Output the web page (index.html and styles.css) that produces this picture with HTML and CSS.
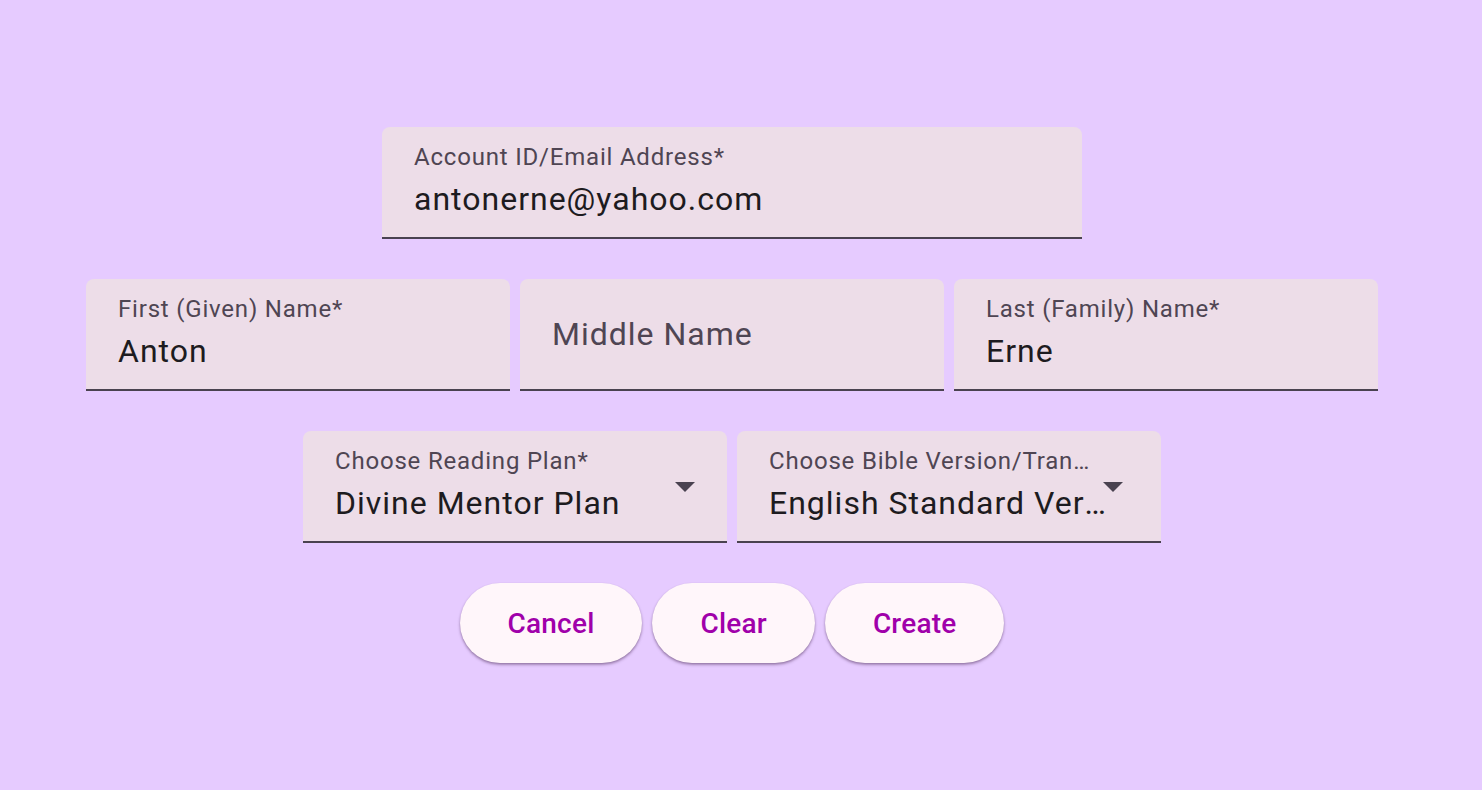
FILE: index.html
```html
<!DOCTYPE html>
<html lang="en">
<head>
<meta charset="utf-8">
<title>Create Account</title>
<link rel="stylesheet" href="styles.css">
</head>
<body>
<main class="page">
  <form class="form">
    <div class="row">
      <div class="field field-wide">
        <div class="label">Account ID/Email Address*</div>
        <div class="value">antonerne@yahoo.com</div>
      </div>
    </div>
    <div class="row">
      <div class="field">
        <div class="label">First (Given) Name*</div>
        <div class="value">Anton</div>
      </div>
      <div class="field field-empty">
        <div class="placeholder">Middle Name</div>
      </div>
      <div class="field">
        <div class="label">Last (Family) Name*</div>
        <div class="value">Erne</div>
      </div>
    </div>
    <div class="row">
      <div class="field select select-plan">
        <div class="select-text">
          <div class="label">Choose Reading Plan*</div>
          <div class="value">Divine Mentor Plan</div>
        </div>
        <svg class="arrow" width="20" height="10" viewBox="7 10 10 5"><path d="M7 10l5 5 5-5z" fill="#4a4250"/></svg>
      </div>
      <div class="field select select-version">
        <div class="select-text">
          <div class="label">Choose Bible Version/Translation*</div>
          <div class="value value-long">English Standard Version</div>
        </div>
        <svg class="arrow" width="20" height="10" viewBox="7 10 10 5"><path d="M7 10l5 5 5-5z" fill="#4a4250"/></svg>
      </div>
    </div>
    <div class="row buttons">
      <button type="button" class="btn">Cancel</button>
      <button type="button" class="btn">Clear</button>
      <button type="button" class="btn">Create</button>
    </div>
  </form>
</main>
</body>
</html>
```
FILE: styles.css
```css
html, body {
  margin: 0;
  padding: 0;
  background: #e6cbff;
  font-family: Roboto, "Liberation Sans", sans-serif;
}

.page {
  width: 1464px;
  min-height: 790px;
  box-sizing: border-box;
  padding-top: 127px;
}

.form {
  display: flex;
  flex-direction: column;
  align-items: center;
  gap: 40px;
}

.row {
  display: flex;
  gap: 10px;
  justify-content: center;
}

.field {
  width: 424px;
  height: 112px;
  box-sizing: border-box;
  background: #eddde8;
  border-radius: 8px 8px 0 0;
  border-bottom: 2px solid #4a4250;
  padding: 14px 32px 0 32px;
  overflow: hidden;
}

.field-wide {
  width: 700px;
}

.label {
  font-size: 24px;
  line-height: 32px;
  letter-spacing: 0.8px;
  color: #4f4553;
  white-space: nowrap;
  overflow: hidden;
  text-overflow: ellipsis;
}

.value {
  margin-top: 6px;
  font-size: 32px;
  line-height: 40px;
  letter-spacing: 1px;
  color: #1d1b20;
  white-space: nowrap;
  overflow: hidden;
  text-overflow: ellipsis;
}

.value-long {
  margin-right: -9px;
}

.field-empty {
  display: flex;
  align-items: center;
  padding-top: 0;
}

.placeholder {
  font-size: 32px;
  line-height: 40px;
  letter-spacing: 1px;
  color: #4f4553;
}

.select {
  display: flex;
  align-items: flex-start;
}

.select-plan {
  padding-right: 32px;
}

.select-version {
  padding-right: 38px;
}

.select-text {
  flex: 1;
  min-width: 0;
}

.arrow {
  flex: none;
  display: block;
  margin-top: 37px;
  margin-left: 3px;
  position: relative;
}

.buttons {
  gap: 10px;
}

.btn {
  height: 80px;
  padding: 0 48px;
  border: none;
  border-radius: 40px;
  background: #fff6fa;
  color: #a000aa;
  font-family: Roboto, "Liberation Sans", sans-serif;
  font-size: 28px;
  font-weight: 500;
  letter-spacing: 0.2px;
  box-shadow: 0 2px 3px rgba(60, 30, 70, 0.35), 0 1px 2px rgba(60, 30, 70, 0.2);
  cursor: pointer;
}
```
